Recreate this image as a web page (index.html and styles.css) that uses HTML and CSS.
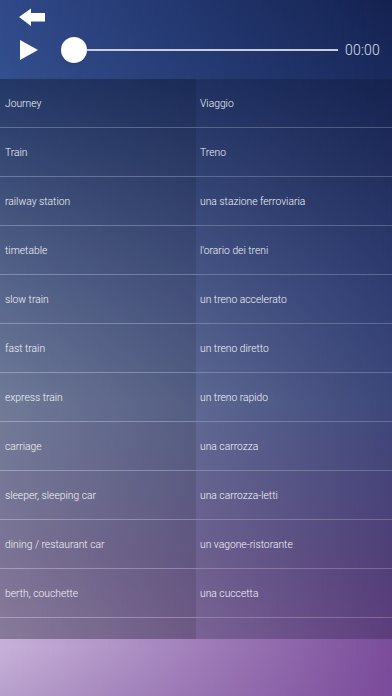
FILE: index.html
```html
<!DOCTYPE html>
<html lang="en">

<head>
    <meta charset="UTF-8">
    <meta name="viewport" content="width=device-width, initial-scale=1.0">
    <title>Viaggio - Treno</title>
    <link rel="stylesheet" href="styles.css">
</head>

<body>
    <div class="app">
        <div class="header">
            <button class="back" aria-label="Back">
                <svg width="26" height="18" viewBox="0 0 26 18">
                    <path d="M0 9 L12 0.5 L12 5 L26 5 L26 13.5 L12 13.5 L12 18 Z" fill="#fff" />
                </svg>
            </button>
            <div class="controls">
                <button class="play" aria-label="Play">
                    <svg width="18" height="20" viewBox="0 0 18 20">
                        <path d="M0 0 L18 10 L0 20 Z" fill="#fff" />
                    </svg>
                </button>
                <div class="slider">
                    <div class="knob"></div>
                    <div class="track"></div>
                </div>
                <span class="time">00:00</span>
            </div>
        </div>

        <div class="list">
            <div class="row"><div class="cell en">Journey</div><div class="cell it">Viaggio</div></div>
            <div class="row"><div class="cell en">Train</div><div class="cell it">Treno</div></div>
            <div class="row"><div class="cell en">railway station</div><div class="cell it">una stazione ferroviaria</div></div>
            <div class="row"><div class="cell en">timetable</div><div class="cell it">l'orario dei treni</div></div>
            <div class="row"><div class="cell en">slow train</div><div class="cell it">un treno accelerato</div></div>
            <div class="row"><div class="cell en">fast train</div><div class="cell it">un treno diretto</div></div>
            <div class="row"><div class="cell en">express train</div><div class="cell it">un treno rapido</div></div>
            <div class="row"><div class="cell en">carriage</div><div class="cell it">una carrozza</div></div>
            <div class="row"><div class="cell en">sleeper, sleeping car</div><div class="cell it">una carrozza-letti</div></div>
            <div class="row"><div class="cell en">dining / restaurant car</div><div class="cell it">un vagone-ristorante</div></div>
            <div class="row"><div class="cell en">berth, couchette</div><div class="cell it">una cuccetta</div></div>
            <div class="row"><div class="cell en"></div><div class="cell it"></div></div>
        </div>
    </div>
</body>

</html>
```

FILE: styles.css
```css
        body {
            margin: 0;
            font-family: Roboto, "Liberation Sans", Arial, sans-serif;
            background: #142250;
        }

        .app {
            position: relative;
            width: 392px;
            height: 696px;
            overflow: hidden;
            /* left edge of the backdrop */
            background: linear-gradient(to bottom, #30498a 0%, #34508e 12%, #8094c4 42%, #a4b2d6 58%, #b6a8d2 80%, #c8b2da 93%, #b8a0cc 100%);
        }

        /* right edge of the backdrop, faded in from the left */
        .app::before {
            content: "";
            position: absolute;
            inset: 0;
            background: linear-gradient(to bottom, #142250 0%, #1a2a5e 12%, #3c4c8a 42%, #4d5a96 58%, #664f92 80%, #7a4c9a 93%, #7a4a9a 100%);
            -webkit-mask-image: linear-gradient(to right, transparent, #000);
            mask-image: linear-gradient(to right, transparent, #000);
        }

        .header,
        .list {
            position: relative;
            z-index: 1;
        }

        .header {
            height: 79px;
            box-sizing: border-box;
            padding: 8px 12px 0 19px;
            display: flex;
            flex-direction: column;
            gap: 11px;
        }

        button {
            background: none;
            border: none;
            padding: 0;
            margin: 0;
            cursor: pointer;
            display: flex;
        }

        .back {
            width: 26px;
            height: 18px;
        }

        .controls {
            display: flex;
            align-items: center;
            height: 26px;
        }

        .play {
            margin-left: 1px;
            width: 18px;
            height: 20px;
        }

        .slider {
            flex: 1;
            display: flex;
            align-items: center;
            margin-left: 23px;
        }

        .knob {
            width: 26px;
            height: 26px;
            border-radius: 50%;
            background: #fff;
            box-shadow: 0 1px 2px rgba(0, 0, 0, 0.15);
            flex: none;
        }

        .track {
            flex: 1;
            height: 2px;
            background: #c9cdd9;
        }

        .time {
            margin-left: 7px;
            font-size: 14px;
            font-weight: 300;
            color: #dde0ea;
            letter-spacing: 0.2px;
        }

        .list {
            height: 560px;
            overflow: hidden;
            background: rgba(10, 15, 40, 0.25);
        }

        .row {
            display: grid;
            grid-template-columns: 196px 1fr;
            height: 49px;
            box-sizing: border-box;
            border-bottom: 1px solid rgba(255, 255, 255, 0.22);
        }

        .cell {
            display: flex;
            align-items: center;
            padding-top: 1px;
            font-size: 10.3px;
            font-weight: 300;
            color: #f4f5f9;
        }

        .en {
            padding-left: 5px;
            background: rgba(0, 0, 0, 0.1);
        }

        .it {
            padding-left: 4px;
        }
```
